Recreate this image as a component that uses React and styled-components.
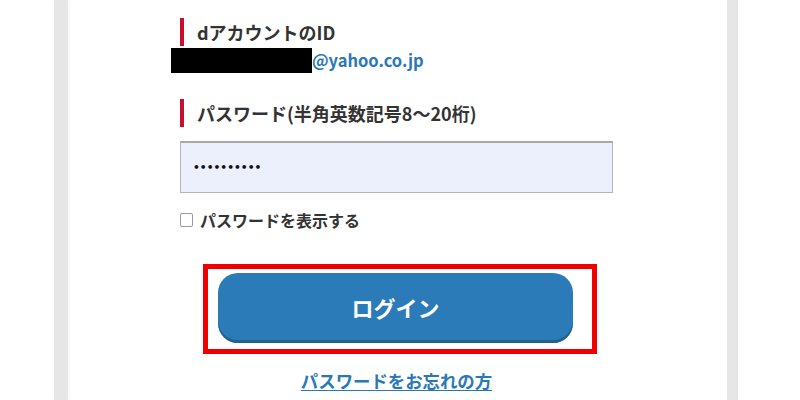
import React from "react";
import styled, { createGlobalStyle } from "styled-components";

const Global = createGlobalStyle`
  html, body { margin: 0; padding: 0; background: #fff; }
  body { font-family: "Noto Sans CJK JP", "Noto Sans", sans-serif; }
`;

const Page = styled.div`
  width: 800px;
  height: 400px;
  overflow: hidden;
  display: flex;
  background: #fff;
`;

const Side = styled.div`
  width: ${(p) => p.$w}px;
  flex: none;
  background: #fff;
`;

const Strip = styled.div`
  width: ${(p) => p.$w}px;
  flex: none;
  background: #e6e6e6;
  box-shadow: -2px 0 3px rgba(0,0,0,0.02), 2px 0 3px rgba(0,0,0,0.03);
`;

const Panel = styled.main`
  flex: 1;
  padding: 18px 0 0 112px;
  box-sizing: border-box;
`;

const Form = styled.div`
  width: 433px;
  display: flex;
  flex-direction: column;
`;

const Label = styled.div`
  display: flex;
  align-items: center;
  gap: 13px;
  height: 28px;
  margin-top: ${(p) => p.$mt || 0}px;
  font-size: 18px;
  font-weight: 700;
  color: #333;
  &::before {
    content: "";
    width: 4px;
    height: 28px;
    background: #c8102e;
    flex: none;
  }
`;

const EmailRow = styled.div`
  display: flex;
  align-items: center;
  height: 25px;
  margin: 2px 0 0 -9px;
`;

const Mask = styled.span`
  width: 141px;
  height: 25px;
  background: #000;
`;

const Email = styled.span`
  font-size: 16.5px;
  font-weight: 700;
  color: #2a78b8;
  line-height: 25px;
`;

const Field = styled.div`
  margin-top: 14px;
  height: 52px;
  box-sizing: border-box;
  border: 1px solid #b5b5b5;
  border-top: 2px solid #a9a9a9;
  background: #ebf0fc;
  display: flex;
  align-items: center;
  padding-left: 12px;
  font-family: "DejaVu Sans", sans-serif;
  font-size: 10.7px;
  font-weight: 700;
  color: #111;
`;

const CheckRow = styled.label`
  display: flex;
  align-items: center;
  gap: 7px;
  margin-top: 19px;
  height: 16px;
  font-size: 16px;
  font-weight: 700;
  color: #333;
`;

const Box = styled.span`
  width: 11px;
  height: 12px;
  border: 1px solid #9a9a9a;
  border-radius: 2px;
  background: #fff;
  flex: none;
`;

const Frame = styled.div`
  margin: 36px 0 0 23px;
  width: 394px;
  box-sizing: border-box;
  border: 5px solid #f00000;
  padding: 4px 19px 6px 10px;
`;

const LoginButton = styled.button`
  width: 355px;
  height: 70px;
  border: none;
  border-radius: 20px;
  background: #2b7bb9;
  box-shadow: inset 0 -3px 0 #21628f;
  color: #fff;
  font-family: "Noto Sans CJK JP", sans-serif;
  font-size: 22px;
  font-weight: 700;
  display: flex;
  align-items: center;
  justify-content: center;
  padding: 0 0 2px;
`;

const Forgot = styled.a`
  margin-top: 17px;
  align-self: center;
  font-size: 17.4px;
  line-height: 20px;
  font-weight: 700;
  color: #2a78b8;
  text-decoration: underline;
  text-underline-offset: 2px;
`;

export default function App() {
  return (
    <Page>
      <Global />
      <Side $w={54} />
      <Strip $w={14} />
      <Panel>
        <Form>
          <Label>dアカウントのID</Label>
          <EmailRow>
            <Mask />
            <Email>@yahoo.co.jp</Email>
          </EmailRow>
          <Label $mt={26}>パスワード(半角英数記号8〜20桁)</Label>
          <Field>••••••••••</Field>
          <CheckRow>
            <Box />
            パスワードを表示する
          </CheckRow>
          <Frame>
            <LoginButton>ログイン</LoginButton>
          </Frame>
          <Forgot href="#">パスワードをお忘れの方</Forgot>
        </Form>
      </Panel>
      <Strip $w={11} />
      <Side $w={62} />
    </Page>
  );
}
